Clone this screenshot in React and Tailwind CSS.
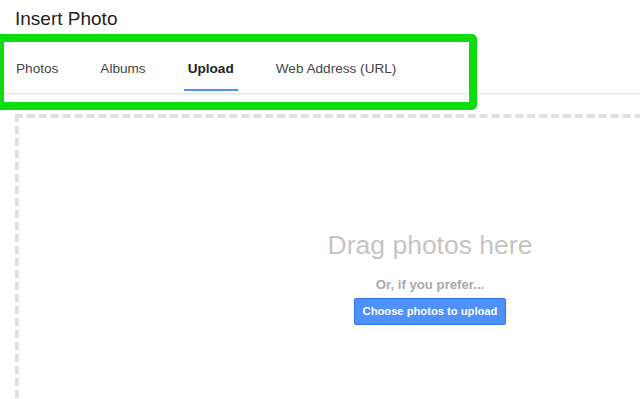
export default function App() {
  const tabs = ['Photos', 'Albums', 'Upload', 'Web Address (URL)']
  return (
    <div className="w-[640px] h-[399px] overflow-hidden bg-white relative" style={{ fontFamily: '"Liberation Sans", Arial, sans-serif' }}>
      <div className="h-[36px] pl-[15px] pt-[8px] text-[19px] leading-[22px] text-[#222]">Insert Photo</div>
      <div className="relative h-[58px] border-b border-[#e5e5e5] shadow-[0_1px_2px_rgba(0,0,0,0.06)]">
        <div className="flex h-full pl-[16px] gap-[42px] text-[13.6px]">
          {tabs.map((t) => (
            <div key={t} className={`relative flex items-center pt-[9px] ${t === 'Upload' ? 'font-bold text-[#222]' : 'text-[#444]'}`}>
              {t}
              {t === 'Upload' && <div className="absolute left-[-4px] right-[-4px] bottom-[2px] h-[2px] bg-[#4d90fe]" />}
            </div>
          ))}
        </div>
        <div className="absolute left-[-4px] top-[-2px] w-[481px] h-[76px] border-[8px] border-[#0ddc0d] rounded-[5px]" />
      </div>
      <div className="mt-[20px] ml-[15px] w-[830px] h-[320px] border-[4px] border-dashed border-[#e0e0e0] flex flex-col items-center pt-[111px]">
        <div className="text-[26.5px] text-[#c4c4c4] leading-[32px]">Drag photos here</div>
        <div className="mt-[14px] text-[13.2px] font-bold text-[#aaa]">Or, if you prefer...</div>
        <button className="mt-[3px] h-[27px] px-[8px] bg-[#4d90fe] border border-[#3079ed] rounded-[2px] text-white text-[11.2px] font-bold">Choose photos to upload</button>
      </div>
    </div>
  )
}
